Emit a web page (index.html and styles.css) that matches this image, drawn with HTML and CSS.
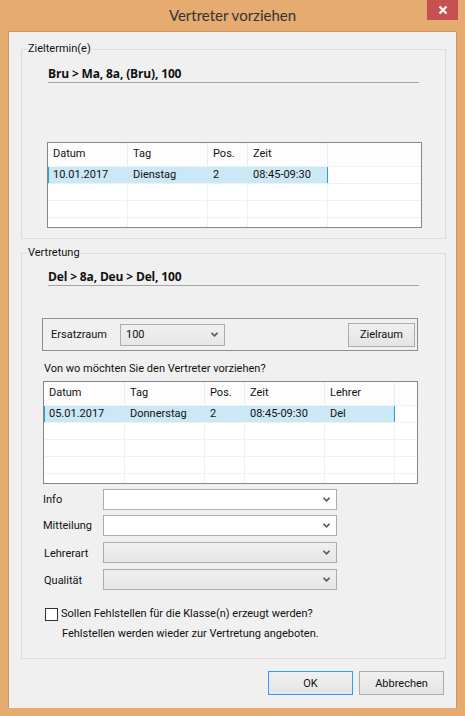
FILE: index.html
```html
<!DOCTYPE html>
<html>
<head>
<meta charset="utf-8">
<link rel="stylesheet" href="styles.css">
</head>
<body>
<div class="window">
  <div class="titlebar">
    <div class="title">Vertreter vorziehen</div>
    <div class="close"><svg width="10" height="10" viewBox="0 0 10 10"><path d="M1.5 1.5 L8.5 8.5 M8.5 1.5 L1.5 8.5" stroke="#fff" stroke-width="2.2" fill="none"/></svg></div>
  </div>
  <div class="client">
    <div class="group g1">
      <span class="legend">Zieltermin(e)</span>
      <div class="boldlabel bl1">Bru &gt; Ma, 8a, (Bru), 100</div>
      <div class="list list1">
        <div class="row head">
          <div class="c">Datum</div><div class="c">Tag</div><div class="c">Pos.</div><div class="c">Zeit</div><div class="c fill"></div>
        </div>
        <div class="row sel">
          <div class="c first">10.01.2017</div><div class="c">Dienstag</div><div class="c">2</div><div class="c last">08:45-09:30</div><div class="c fill"></div>
        </div>
        <div class="row"><div class="c"></div><div class="c"></div><div class="c"></div><div class="c"></div><div class="c fill"></div></div>
        <div class="row"><div class="c"></div><div class="c"></div><div class="c"></div><div class="c"></div><div class="c fill"></div></div>
        <div class="row"><div class="c"></div><div class="c"></div><div class="c"></div><div class="c"></div><div class="c fill"></div></div>
      </div>
    </div>

    <div class="group g2">
      <span class="legend">Vertretung</span>
      <div class="boldlabel bl2">Del &gt; 8a, Deu &gt; Del, 100</div>
      <div class="roombox">
        <span class="roomlabel">Ersatzraum</span>
        <div class="combo dropdown roomcombo"><span class="val">100</span><svg class="arrow" width="7" height="5" viewBox="0 0 7 5"><path d="M0.5 0.8 L3.5 3.8 L6.5 0.8" stroke="#5a5a5a" stroke-width="1.6" fill="none"/></svg></div>
        <div class="btn zielraum">Zielraum</div>
      </div>
      <div class="question">Von wo möchten Sie den Vertreter vorziehen?</div>
      <div class="list list2">
        <div class="row head">
          <div class="c">Datum</div><div class="c">Tag</div><div class="c">Pos.</div><div class="c">Zeit</div><div class="c">Lehrer</div><div class="c fill"></div>
        </div>
        <div class="row sel">
          <div class="c first">05.01.2017</div><div class="c">Donnerstag</div><div class="c">2</div><div class="c">08:45-09:30</div><div class="c last">Del</div><div class="c fill"></div>
        </div>
        <div class="row"><div class="c"></div><div class="c"></div><div class="c"></div><div class="c"></div><div class="c"></div><div class="c fill"></div></div>
        <div class="row"><div class="c"></div><div class="c"></div><div class="c"></div><div class="c"></div><div class="c"></div><div class="c fill"></div></div>
        <div class="row"><div class="c"></div><div class="c"></div><div class="c"></div><div class="c"></div><div class="c"></div><div class="c fill"></div></div>
        <div class="row"><div class="c"></div><div class="c"></div><div class="c"></div><div class="c"></div><div class="c"></div><div class="c fill"></div></div>
      </div>
      <div class="fields">
        <div class="field f-info">
          <span class="flabel">Info</span>
          <div class="combo"><span class="val"></span><svg class="arrow" width="7" height="5" viewBox="0 0 7 5"><path d="M0.5 0.8 L3.5 3.8 L6.5 0.8" stroke="#5a5a5a" stroke-width="1.6" fill="none"/></svg></div>
        </div>
        <div class="field f-mitt">
          <span class="flabel">Mitteilung</span>
          <div class="combo"><span class="val"></span><svg class="arrow" width="7" height="5" viewBox="0 0 7 5"><path d="M0.5 0.8 L3.5 3.8 L6.5 0.8" stroke="#5a5a5a" stroke-width="1.6" fill="none"/></svg></div>
        </div>
        <div class="field f-lehr">
          <span class="flabel shift">Lehrerart</span>
          <div class="combo dropdown"><span class="val"></span><svg class="arrow" width="7" height="5" viewBox="0 0 7 5"><path d="M0.5 0.8 L3.5 3.8 L6.5 0.8" stroke="#5a5a5a" stroke-width="1.6" fill="none"/></svg></div>
        </div>
        <div class="field f-qual">
          <span class="flabel shift">Qualität</span>
          <div class="combo dropdown"><span class="val"></span><svg class="arrow" width="7" height="5" viewBox="0 0 7 5"><path d="M0.5 0.8 L3.5 3.8 L6.5 0.8" stroke="#5a5a5a" stroke-width="1.6" fill="none"/></svg></div>
        </div>
      </div>
      <div class="checkrow">
        <span class="checkbox"></span>
        <span>Sollen Fehlstellen für die Klasse(n) erzeugt werden?</span>
      </div>
      <div class="hint">Fehlstellen werden wieder zur Vertretung angeboten.</div>
    </div>

    <div class="buttons">
      <div class="btn dlg default">OK</div>
      <div class="btn dlg">Abbrechen</div>
    </div>
  </div>
</div>
</body>
</html>
```

FILE: styles.css
```css
* { box-sizing: border-box; }
html, body { margin: 0; padding: 0; }
body {
  width: 465px;
  height: 716px;
  overflow: hidden;
  background: #e6ab70;
  font-family: Roboto, "Open Sans", sans-serif;
  font-size: 11px;
  color: #111;
}
.window {
  width: 465px;
  height: 716px;
  background: #e6ab70;
  display: flex;
  flex-direction: column;
}
.titlebar {
  height: 31px;
  display: flex;
  justify-content: center;
  position: relative;
}
.title {
  font-family: Lato, sans-serif;
  font-size: 15px;
  line-height: 18px;
  padding-top: 6px;
  color: #333;
}
.close {
  position: absolute;
  left: 427px;
  top: 0;
  width: 31px;
  height: 20px;
  background: #c75050;
  display: flex;
  align-items: center;
  justify-content: center;
}
.client {
  margin-left: 8px;
  width: 449px;
  height: 677px;
  background: #f0f0f0;
  border: 1px solid #cf9660;
  border-bottom: none;
  display: flex;
  flex-direction: column;
}
.group {
  margin-left: 12px;
  width: 425px;
  border: 1px solid #dcdcdc;
  display: flex;
  flex-direction: column;
  align-items: flex-start;
}
.g1 { margin-top: 17px; height: 190px; }
.g2 { margin-top: 14px; height: 406px; }
.legend {
  margin: -9px 0 0 5px;
  padding: 0 1px;
  line-height: 16px;
  background: #f0f0f0;
}
.boldlabel {
  margin-left: 26px;
  width: 371px;
  line-height: 16px;
  height: 17px;
  font-family: "Open Sans", Roboto, sans-serif;
  font-size: 12px;
  font-weight: bold;
  letter-spacing: -0.15px;
  border-bottom: 1px solid #a5a5a5;
}
.bl1 { margin-top: 9px; }
.bl2 { margin-top: 8px; }

/* list views */
.list {
  border: 1px solid #828790;
  background: #fff;
  overflow: hidden;
  display: flex;
  flex-direction: column;
}
.list1 { margin-top: 59px; margin-left: 25px; width: 375px; height: 86px; }
.list2 { margin-top: 4px; margin-left: 21px; width: 375px; height: 103px; }
.row {
  display: grid;
  height: 17px;
  flex: none;
  border-bottom: 1px solid #f0f0f0;
}
.list1 .row { grid-template-columns: 80px 80px 40px 80px 91px; }
.list2 .row { grid-template-columns: 81px 80px 40px 80px 70px 20px; }
.row.head {
  height: 24px;
  background: #fdfdfd;
  border-bottom: 1px solid #f0f0f0;
}
.c {
  border-right: 1px solid #f0f0f0;
  padding-left: 5px;
  line-height: 16px;
  white-space: nowrap;
  overflow: hidden;
}
.head .c {
  border-right: 1px solid #e8eef5;
  line-height: 22px;
}
.c.fill { border-right: none; }
.list1 .row .c.fill { margin-right: 2px; }
.sel .c:not(.fill) { background: #cbe8f6; border-right-color: #cbe8f6; }
.sel .c.first { border-left: 1px solid #26a0da; padding-left: 4px; }
.sel .c.last { border-right: 1px solid #26a0da; }

/* room box */
.roombox {
  margin-top: 32px;
  margin-left: 20px;
  width: 376px;
  height: 33px;
  border: 1px solid #8e8e8e;
  display: flex;
  align-items: center;
}
.roomlabel { margin-left: 8px; width: 69px; }
.combo {
  height: 21px;
  border: 1px solid #abadb3;
  background: #fff;
  display: flex;
  align-items: center;
  justify-content: space-between;
  padding: 0 6px 0 5px;
}
.combo.dropdown {
  border-color: #acacac;
  background: linear-gradient(#f0f0f0, #e6e6e6);
}
.roomcombo { width: 105px; height: 22px; }
.btn {
  border: 1px solid #acacac;
  background: linear-gradient(#f0f0f0, #e5e5e5);
  display: flex;
  align-items: center;
  justify-content: center;
  height: 24px;
}
.zielraum { margin-left: auto; margin-right: 2px; width: 67px; }
.question {
  margin-top: 10px;
  margin-left: 22px;
  line-height: 16px;
}

/* fields */
.fields {
  margin-top: 5px;
  margin-left: 21px;
  display: flex;
  flex-direction: column;
  gap: 6px;
}
.f-mitt { margin-top: -1px; }
.field {
  display: flex;
  align-items: center;
}
.flabel { width: 60px; }
.flabel.shift { padding-left: 1px; padding-top: 2px; }
.field .combo { width: 234px; }

.checkrow {
  margin-top: 16px;
  margin-left: 23px;
  display: flex;
  align-items: center;
  gap: 3px;
  line-height: 16px;
}
.checkbox {
  width: 13px;
  height: 13px;
  border: 1px solid #333;
  background: #fff;
}
.hint {
  margin-top: 4px;
  margin-left: 40px;
  line-height: 16px;
}

.buttons {
  margin-top: 12px;
  display: flex;
  justify-content: flex-end;
  gap: 6px;
  padding-right: 12px;
}
.dlg { width: 85px; }
.dlg.default { border-color: #3399ff; }
```
